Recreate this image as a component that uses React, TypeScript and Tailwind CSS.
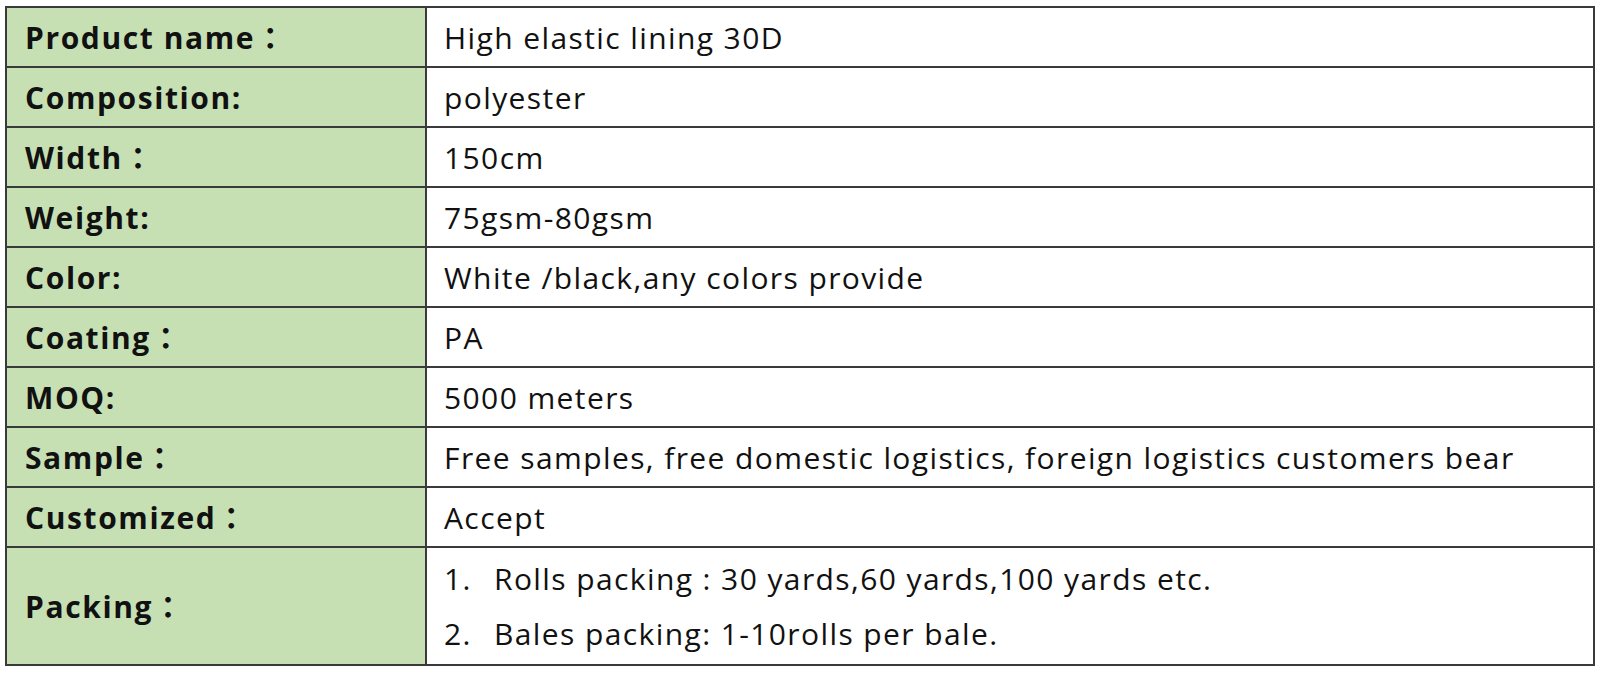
import React from 'react'

const rows: { label: string; value: React.ReactNode }[] = [
  { label: 'Product name：', value: 'High elastic lining 30D' },
  { label: 'Composition:', value: 'polyester' },
  { label: 'Width：', value: '150cm' },
  { label: 'Weight:', value: '75gsm-80gsm' },
  { label: 'Color:', value: 'White /black,any colors provide' },
  { label: 'Coating：', value: 'PA' },
  { label: 'MOQ:', value: '5000 meters' },
  { label: 'Sample：', value: 'Free samples, free domestic logistics, foreign logistics customers bear' },
  { label: 'Customized：', value: 'Accept' },
]

const packing = [
  'Rolls packing : 30 yards,60 yards,100 yards etc.',
  'Bales packing: 1-10rolls per bale.',
]

export default function App() {
  return (
    <div
      className="min-h-[673px] bg-white pl-[5px] pt-[6px] text-[#111]"
      style={{ fontFamily: '"Open Sans", "Noto Sans CJK TC", sans-serif' }}
    >
      <div className="w-[1590px] border-2 border-[#3a3a3a]">
        {rows.map((row) => (
          <div key={row.label} className="grid h-[60px] grid-cols-[420px_1fr] border-b-2 border-[#3a3a3a]">
            <div className="flex items-center border-r-2 border-[#3a3a3a] bg-[#c6e0b4] pl-[18px] text-[30px] font-bold tracking-[1.6px]">
              {row.label}
            </div>
            <div className="flex items-center whitespace-nowrap pl-[17px] text-[30px] tracking-[1.4px]">{row.value}</div>
          </div>
        ))}
        <div className="grid h-[116px] grid-cols-[420px_1fr]">
          <div className="flex items-center border-r-2 border-[#3a3a3a] bg-[#c6e0b4] pl-[18px] text-[30px] font-bold tracking-[1.6px]">
            Packing：
          </div>
          <div className="flex flex-col justify-center gap-[19px] pl-[17px] text-[30px] leading-[36px] tracking-[1.4px]">
            {packing.map((line, i) => (
              <div key={i} className="flex">
                <span className="w-[50px]">{i + 1}.</span>
                <span>{line}</span>
              </div>
            ))}
          </div>
        </div>
      </div>
    </div>
  )
}
